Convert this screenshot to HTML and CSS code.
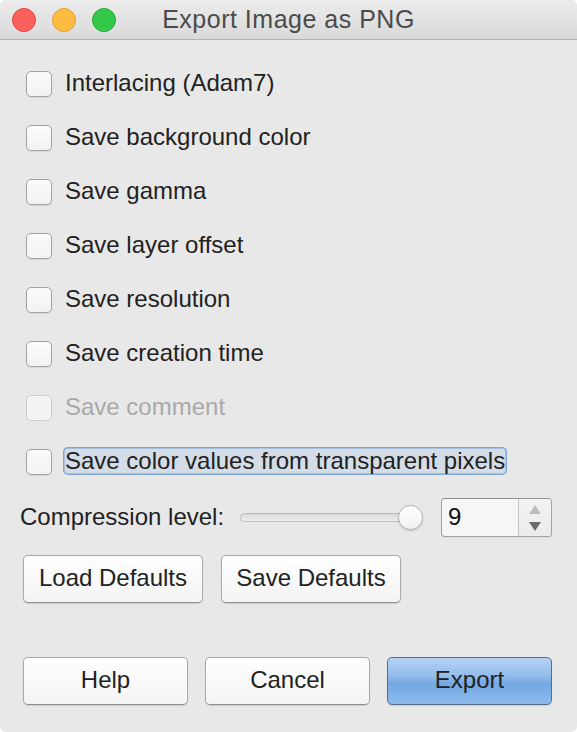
FILE: index.html
```html
<!DOCTYPE html>
<html>
<head>
<meta charset="utf-8">
<link rel="stylesheet" href="styles.css">
</head>
<body>
<div class="window">
  <div class="titlebar">
    <div class="lights">
      <span class="light red"></span>
      <span class="light yellow"></span>
      <span class="light green"></span>
    </div>
    <div class="title">Export Image as PNG</div>
    <div></div>
  </div>
  <div class="content">
    <div class="options">
      <div class="row"><span class="box"></span><span class="label">Interlacing (Adam7)</span></div>
      <div class="row"><span class="box"></span><span class="label">Save background color</span></div>
      <div class="row"><span class="box"></span><span class="label">Save gamma</span></div>
      <div class="row"><span class="box"></span><span class="label">Save layer offset</span></div>
      <div class="row"><span class="box"></span><span class="label">Save resolution</span></div>
      <div class="row"><span class="box"></span><span class="label">Save creation time</span></div>
      <div class="row disabled"><span class="box"></span><span class="label">Save comment</span></div>
      <div class="row"><span class="box"></span><span class="label focused">Save color values from transparent pixels</span></div>
    </div>
    <div class="compression">
      <span class="comp-label">Compression level:</span>
      <div class="slider"><div class="track"></div><div class="knob"></div></div>
      <div class="spin">
        <span class="spin-value">9</span>
        <div class="spin-arrows">
          <span class="arrow up"></span>
          <span class="arrow down"></span>
        </div>
      </div>
    </div>
    <div class="defaults">
      <button class="btn wide">Load Defaults</button>
      <button class="btn wide">Save Defaults</button>
    </div>
    <div class="actions">
      <button class="btn">Help</button>
      <button class="btn">Cancel</button>
      <button class="btn primary">Export</button>
    </div>
  </div>
</div>
</body>
</html>
```
FILE: styles.css
```css
html, body {
  margin: 0;
  padding: 0;
  background: #ffffff;
}
body {
  font-family: "Liberation Sans", Arial, sans-serif;
  color: #222;
}
.window {
  width: 577px;
  height: 732px;
  background: #e8e8e8;
  border-radius: 6px;
  overflow: hidden;
  display: flex;
  flex-direction: column;
}
.titlebar {
  height: 39px;
  border-bottom: 1px solid #b3b3b3;
  background: linear-gradient(#ececec, #d9d9d9);
  display: grid;
  grid-template-columns: 1fr auto 1fr;
  align-items: center;
}
.lights {
  display: flex;
  gap: 16px;
  padding-left: 12px;
  padding-top: 1px;
}
.light {
  width: 22px;
  height: 22px;
  border-radius: 50%;
  border: 1px solid;
}
.red { background: #fc605c; border-color: #df4744; }
.yellow { background: #fdbc40; border-color: #dea236; }
.green { background: #34c84a; border-color: #27aa35; }
.title {
  font-size: 25px;
  letter-spacing: 0.5px;
  color: #4b4b4b;
  padding-bottom: 1px;
}
.content {
  padding: 16px 25px 0 23px;
  display: flex;
  flex-direction: column;
}
.options {
  display: flex;
  flex-direction: column;
  padding-left: 3px;
}
.row {
  height: 54px;
  display: flex;
  align-items: center;
  font-size: 24px;
}
.box {
  width: 24px;
  height: 24px;
  border: 1px solid #a3a3a3;
  border-radius: 5px;
  background: linear-gradient(#fbfbfb, #f2f2f2);
  box-shadow: 0 1px 1px rgba(0,0,0,0.08);
  flex: none;
  margin-top: 2px;
}
.label {
  margin-left: 11px;
  padding: 0 2px;
  line-height: 28px;
  border-radius: 5px;
}
.label.focused {
  background: #d3dce7;
  box-shadow: inset 0 0 0 1.5px #7ea6d6;
}
.row.disabled .box {
  border-color: #cdcdcd;
  background: #f3f3f3;
  box-shadow: none;
}
.row.disabled .label {
  color: #a9a9a9;
}
.compression {
  margin-top: 10px;
  height: 39px;
  display: flex;
  align-items: center;
  font-size: 24px;
  margin-left: -3px;
}
.comp-label {
  width: 220px;
  flex: none;
  padding-bottom: 2px;
}
.slider {
  width: 182px;
  height: 26px;
  display: flex;
  align-items: center;
  position: relative;
  flex: none;
}
.track {
  width: 100%;
  height: 9px;
  border: 1px solid #bcbcbc;
  border-radius: 6px;
  background: linear-gradient(#dadada, #efefef);
  box-sizing: border-box;
}
.knob {
  position: absolute;
  left: 158px;
  top: 0;
  width: 23px;
  height: 23px;
  border-radius: 50%;
  border: 1px solid #b5b5b5;
  background: linear-gradient(#ffffff, #f1f1f1);
  box-shadow: 0 1px 2px rgba(0,0,0,0.18);
}
.spin {
  margin-left: 19px;
  width: 111px;
  height: 39px;
  box-sizing: border-box;
  border: 1px solid #a2a2a2;
  border-top-color: #8f8f8f;
  border-radius: 4px;
  background: #f6f6f6;
  display: flex;
  box-shadow: 0 1px 1px rgba(0,0,0,0.06);
}
.spin-value {
  flex: 1;
  padding-left: 6px;
  line-height: 35px;
  color: #111;
}
.spin-arrows {
  width: 32px;
  border-left: 1px solid #c6c6c6;
  display: flex;
  flex-direction: column;
  align-items: center;
  justify-content: center;
  gap: 8px;
  background: linear-gradient(#f3f3f3, #ebebeb);
  border-radius: 0 3px 3px 0;
}
.arrow {
  width: 0;
  height: 0;
  border-left: 6px solid transparent;
  border-right: 6px solid transparent;
}
.arrow.up {
  border-bottom: 9px solid #bdbdbd;
}
.arrow.down {
  border-top: 9px solid #6c6c6c;
}
.defaults {
  margin-top: 18px;
  display: flex;
  gap: 18px;
}
.btn {
  font-family: "Liberation Sans", Arial, sans-serif;
  font-size: 24px;
  color: #222;
  height: 48px;
  border: 1px solid #a9a9a9;
  border-bottom-color: #8e8e8e;
  border-radius: 5px;
  background: linear-gradient(#ffffff, #f4f4f4);
  box-shadow: 0 1px 1px rgba(0,0,0,0.12);
  padding: 0 0 3px 0;
  margin: 0;
}
.btn.wide {
  width: 180px;
}
.actions {
  margin-top: 54px;
  display: grid;
  grid-template-columns: repeat(3, 1fr);
  gap: 17px;
}
.btn.primary {
  border-color: #5a6c84;
  background: linear-gradient(#b3d2f4 0%, #93bcec 40%, #74a8e3 55%, #8cbcee 100%);
}
```
